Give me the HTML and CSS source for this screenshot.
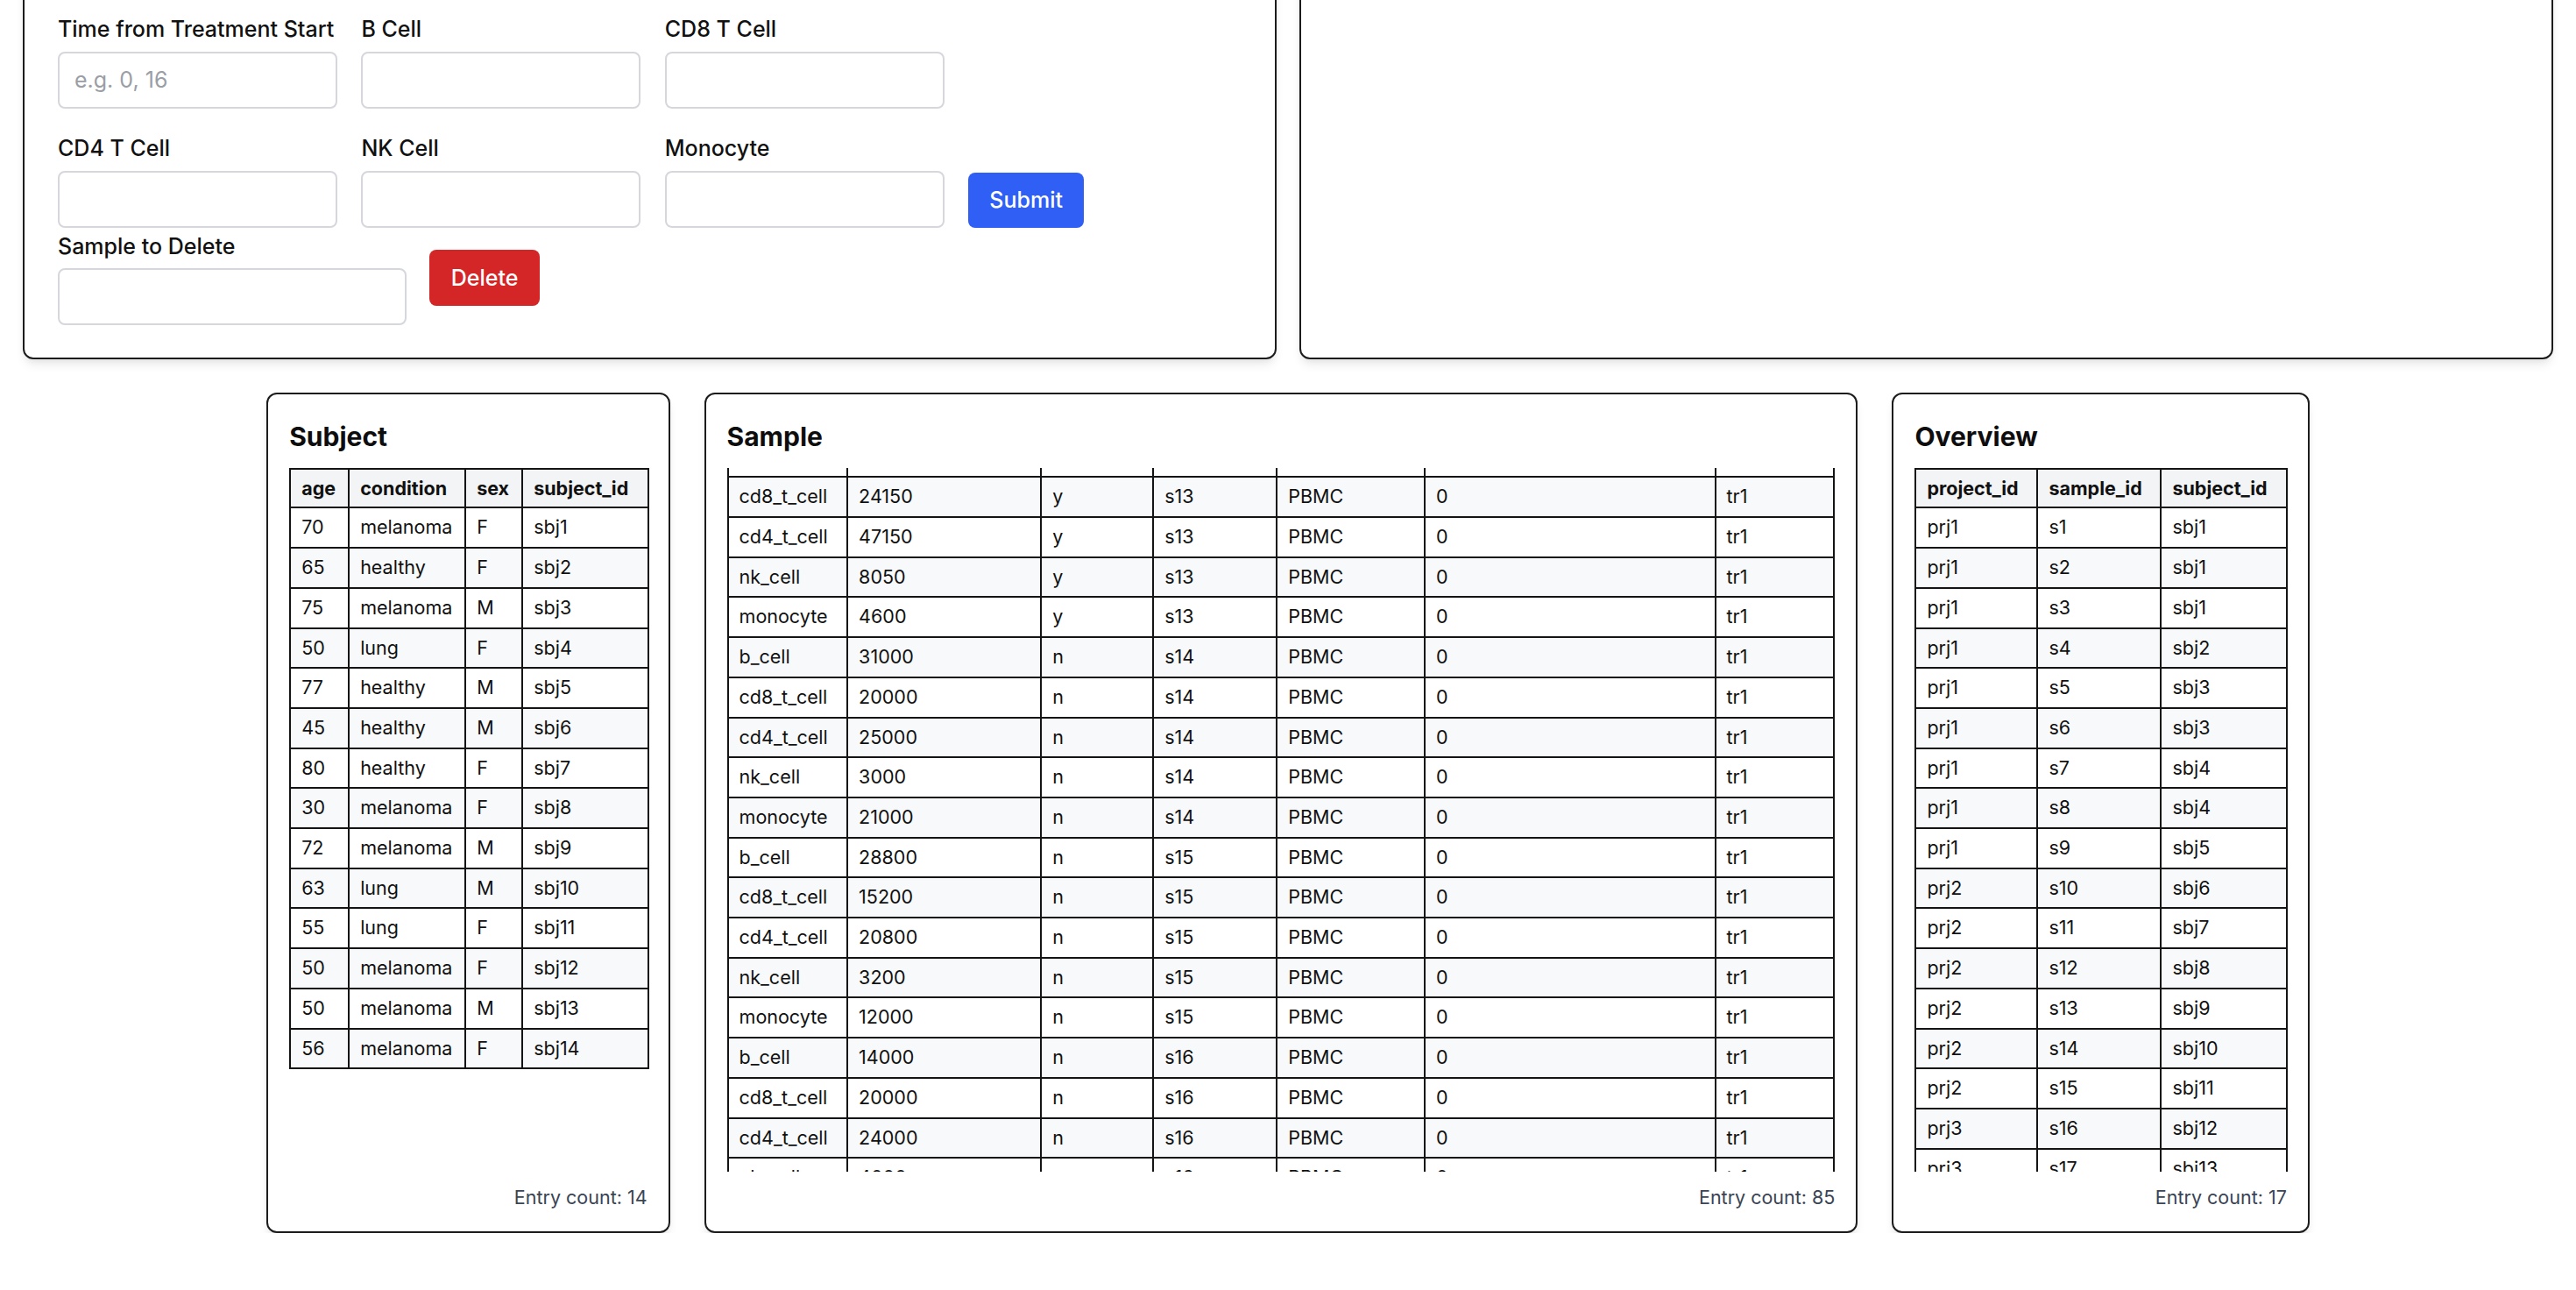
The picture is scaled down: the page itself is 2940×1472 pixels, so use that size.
FILE: index.html
```html
<!DOCTYPE html>
<html lang="en">
<head>
<meta charset="utf-8">
<title>Cell Count Dashboard</title>
<link rel="stylesheet" href="styles.css">
</head>
<body>
<div class="top">
  <section class="panel">
    <form class="entry-form">
      <div class="row">
        <div class="field"><label class="label">Time from Treatment Start</label><input class="input" type="text" placeholder="e.g. 0, 16"></div>
        <div class="field"><label class="label">B Cell</label><input class="input" type="text"></div>
        <div class="field"><label class="label">CD8 T Cell</label><input class="input" type="text"></div>
      </div>
      <div class="row row--next">
        <div class="field"><label class="label">CD4 T Cell</label><input class="input" type="text"></div>
        <div class="field"><label class="label">NK Cell</label><input class="input" type="text"></div>
        <div class="field"><label class="label">Monocyte</label><input class="input" type="text"></div>
        <button class="btn btn--blue" type="button">Submit</button>
      </div>
    </form>
    <form class="delete-row">
      <div class="field field--wide"><label class="label">Sample to Delete</label><input class="input" type="text"></div>
      <button class="btn btn--red" type="button">Delete</button>
    </form>
  </section>
  <section class="panel"></section>
</div>

<div class="cards">
  <section class="card card--subject">
    <h2 class="card-title">Subject</h2>
    <div class="scroll">
      <table class="table">
        <colgroup><col class="w67"><col class="w133"><col class="w65"><col class="w143"></colgroup>
        <thead><tr><th>age</th><th>condition</th><th>sex</th><th>subject_id</th></tr></thead>
        <tbody>
          <tr><td>70</td><td>melanoma</td><td>F</td><td>sbj1</td></tr>
          <tr><td>65</td><td>healthy</td><td>F</td><td>sbj2</td></tr>
          <tr><td>75</td><td>melanoma</td><td>M</td><td>sbj3</td></tr>
          <tr><td>50</td><td>lung</td><td>F</td><td>sbj4</td></tr>
          <tr><td>77</td><td>healthy</td><td>M</td><td>sbj5</td></tr>
          <tr><td>45</td><td>healthy</td><td>M</td><td>sbj6</td></tr>
          <tr><td>80</td><td>healthy</td><td>F</td><td>sbj7</td></tr>
          <tr><td>30</td><td>melanoma</td><td>F</td><td>sbj8</td></tr>
          <tr><td>72</td><td>melanoma</td><td>M</td><td>sbj9</td></tr>
          <tr><td>63</td><td>lung</td><td>M</td><td>sbj10</td></tr>
          <tr><td>55</td><td>lung</td><td>F</td><td>sbj11</td></tr>
          <tr><td>50</td><td>melanoma</td><td>F</td><td>sbj12</td></tr>
          <tr><td>50</td><td>melanoma</td><td>M</td><td>sbj13</td></tr>
          <tr><td>56</td><td>melanoma</td><td>F</td><td>sbj14</td></tr>
        </tbody>
      </table>
    </div>
    <p class="count">Entry count: 14</p>
  </section>

  <section class="card card--sample">
    <h2 class="card-title">Sample</h2>
    <div class="scroll">
      <table class="table table--scrolled">
        <colgroup><col class="w136"><col class="w221"><col class="w128"><col class="w141"><col class="w168"><col class="w331"><col class="w135"></colgroup>
        <tbody>
          <tr><td>b_cell</td><td>11250</td><td>y</td><td>s13</td><td>PBMC</td><td>0</td><td>tr1</td></tr>
          <tr><td>cd8_t_cell</td><td>24150</td><td>y</td><td>s13</td><td>PBMC</td><td>0</td><td>tr1</td></tr>
          <tr><td>cd4_t_cell</td><td>47150</td><td>y</td><td>s13</td><td>PBMC</td><td>0</td><td>tr1</td></tr>
          <tr><td>nk_cell</td><td>8050</td><td>y</td><td>s13</td><td>PBMC</td><td>0</td><td>tr1</td></tr>
          <tr><td>monocyte</td><td>4600</td><td>y</td><td>s13</td><td>PBMC</td><td>0</td><td>tr1</td></tr>
          <tr><td>b_cell</td><td>31000</td><td>n</td><td>s14</td><td>PBMC</td><td>0</td><td>tr1</td></tr>
          <tr><td>cd8_t_cell</td><td>20000</td><td>n</td><td>s14</td><td>PBMC</td><td>0</td><td>tr1</td></tr>
          <tr><td>cd4_t_cell</td><td>25000</td><td>n</td><td>s14</td><td>PBMC</td><td>0</td><td>tr1</td></tr>
          <tr><td>nk_cell</td><td>3000</td><td>n</td><td>s14</td><td>PBMC</td><td>0</td><td>tr1</td></tr>
          <tr><td>monocyte</td><td>21000</td><td>n</td><td>s14</td><td>PBMC</td><td>0</td><td>tr1</td></tr>
          <tr><td>b_cell</td><td>28800</td><td>n</td><td>s15</td><td>PBMC</td><td>0</td><td>tr1</td></tr>
          <tr><td>cd8_t_cell</td><td>15200</td><td>n</td><td>s15</td><td>PBMC</td><td>0</td><td>tr1</td></tr>
          <tr><td>cd4_t_cell</td><td>20800</td><td>n</td><td>s15</td><td>PBMC</td><td>0</td><td>tr1</td></tr>
          <tr><td>nk_cell</td><td>3200</td><td>n</td><td>s15</td><td>PBMC</td><td>0</td><td>tr1</td></tr>
          <tr><td>monocyte</td><td>12000</td><td>n</td><td>s15</td><td>PBMC</td><td>0</td><td>tr1</td></tr>
          <tr><td>b_cell</td><td>14000</td><td>n</td><td>s16</td><td>PBMC</td><td>0</td><td>tr1</td></tr>
          <tr><td>cd8_t_cell</td><td>20000</td><td>n</td><td>s16</td><td>PBMC</td><td>0</td><td>tr1</td></tr>
          <tr><td>cd4_t_cell</td><td>24000</td><td>n</td><td>s16</td><td>PBMC</td><td>0</td><td>tr1</td></tr>
          <tr><td>nk_cell</td><td>4000</td><td>n</td><td>s16</td><td>PBMC</td><td>0</td><td>tr1</td></tr>
        </tbody>
      </table>
    </div>
    <p class="count">Entry count: 85</p>
  </section>

  <section class="card card--overview">
    <h2 class="card-title">Overview</h2>
    <div class="scroll">
      <table class="table">
        <colgroup><col class="w139"><col class="w141"><col class="w143"></colgroup>
        <thead><tr><th>project_id</th><th>sample_id</th><th>subject_id</th></tr></thead>
        <tbody>
          <tr><td>prj1</td><td>s1</td><td>sbj1</td></tr>
          <tr><td>prj1</td><td>s2</td><td>sbj1</td></tr>
          <tr><td>prj1</td><td>s3</td><td>sbj1</td></tr>
          <tr><td>prj1</td><td>s4</td><td>sbj2</td></tr>
          <tr><td>prj1</td><td>s5</td><td>sbj3</td></tr>
          <tr><td>prj1</td><td>s6</td><td>sbj3</td></tr>
          <tr><td>prj1</td><td>s7</td><td>sbj4</td></tr>
          <tr><td>prj1</td><td>s8</td><td>sbj4</td></tr>
          <tr><td>prj1</td><td>s9</td><td>sbj5</td></tr>
          <tr><td>prj2</td><td>s10</td><td>sbj6</td></tr>
          <tr><td>prj2</td><td>s11</td><td>sbj7</td></tr>
          <tr><td>prj2</td><td>s12</td><td>sbj8</td></tr>
          <tr><td>prj2</td><td>s13</td><td>sbj9</td></tr>
          <tr><td>prj2</td><td>s14</td><td>sbj10</td></tr>
          <tr><td>prj2</td><td>s15</td><td>sbj11</td></tr>
          <tr><td>prj3</td><td>s16</td><td>sbj12</td></tr>
          <tr><td>prj3</td><td>s17</td><td>sbj13</td></tr>
        </tbody>
      </table>
    </div>
    <p class="count">Entry count: 17</p>
  </section>
</div>
</body>
</html>
```

FILE: styles.css
```css
* { box-sizing: border-box; }

html, body {
  margin: 0;
  background: #ffffff;
}

body {
  font-family: Inter, "Noto Sans", "Liberation Sans", sans-serif;
  color: #111111;
}

/* ---------- top section ---------- */
.top {
  display: grid;
  grid-template-columns: 1fr 1fr;
  gap: 26px;
  padding: 0 26px;
  margin-top: -25px;
}

.panel {
  background: #ffffff;
  border: 2px solid #1c1c1c;
  border-radius: 12px;
  padding: 38px 38px 36.5px;
  box-shadow: 0 8px 12px -2px rgba(0, 0, 0, 0.08), 0 4px 8px -4px rgba(0, 0, 0, 0.08);
}

.entry-form { margin: 0; }

.row {
  display: flex;
  align-items: flex-end;
  gap: 27.4px;
}

.row--next { margin-top: 27.5px; }

.delete-row {
  display: flex;
  align-items: center;
  gap: 26.4px;
  margin: 3px 0 0;
}

.field {
  display: flex;
  flex-direction: column;
  width: 319px;
}

.field--wide { width: 398px; }

.label {
  display: block;
  font-size: 25px;
  font-weight: 500;
  line-height: 36px;
  margin-bottom: 7.5px;
  color: #111111;
}

.input {
  height: 65px;
  width: 100%;
  border: 2px solid #d5d7dc;
  border-radius: 8px;
  padding: 0 17px;
  font-family: inherit;
  font-size: 25px;
  color: #111111;
  background: #ffffff;
  outline: none;
}

.input::placeholder { color: #9a9ea6; }

.btn {
  border: 0;
  border-radius: 8px;
  color: #ffffff;
  font-family: inherit;
  font-size: 25px;
  font-weight: 500;
  height: 63px;
  padding: 0;
  cursor: pointer;
}

.btn--blue {
  background: #2f5ff4;
  width: 132px;
}

.btn--red {
  background: #d42626;
  width: 125.5px;
  height: 63.7px;
}

/* ---------- cards ---------- */
.cards {
  display: flex;
  justify-content: center;
  gap: 39px;
  margin-top: 38.8px;
}

.card {
  height: 959px;
  background: #ffffff;
  border: 2px solid #1c1c1c;
  border-radius: 12px;
  padding: 28px 24px 24px;
  display: flex;
  flex-direction: column;
  box-shadow: 0 8px 12px -2px rgba(0, 0, 0, 0.08), 0 4px 8px -4px rgba(0, 0, 0, 0.08);
}

.card--subject { width: 460.4px; }
.card--sample { width: 1316.9px; }
.card--overview { width: 476.4px; }

.card-title {
  font-size: 30px;
  font-weight: 700;
  line-height: 40px;
  margin: 0 0 15.4px;
  color: #0d0d0d;
}

.scroll {
  flex: 1 1 auto;
  min-height: 0;
  overflow-x: visible;
  overflow-y: clip;
}

.count {
  margin: 14.8px 0 0;
  text-align: right;
  font-size: 21.5px;
  line-height: 30px;
  color: #3a4454;
}

/* ---------- tables ---------- */
.table {
  width: 100%;
  border-collapse: collapse;
  table-layout: fixed;
  font-size: 21.5px;
  color: #111111;
}

.table--scrolled { margin-top: -36.1px; }

.table th,
.table td {
  border: 2px solid #141414;
  padding: 6px 12px;
  text-align: left;
  white-space: nowrap;
  overflow: hidden;
}

.table th {
  font-weight: 700;
  line-height: 30.7px;
  background: #f3f4f6;
}

.table td {
  font-weight: 400;
  line-height: 31.7px;
  background: #ffffff;
}

.table tbody tr:nth-child(even) td { background: #f8f9fb; }

.w65 { width: 65px; }
.w67 { width: 67px; }
.w128 { width: 128px; }
.w133 { width: 133px; }
.w135 { width: 135.8px; }
.w136 { width: 136.5px; }
.w139 { width: 139px; }
.w141 { width: 141px; }
.w143 { width: 143.4px; }
.w168 { width: 168.6px; }
.w221 { width: 221px; }
.w331 { width: 331.4px; }
```
